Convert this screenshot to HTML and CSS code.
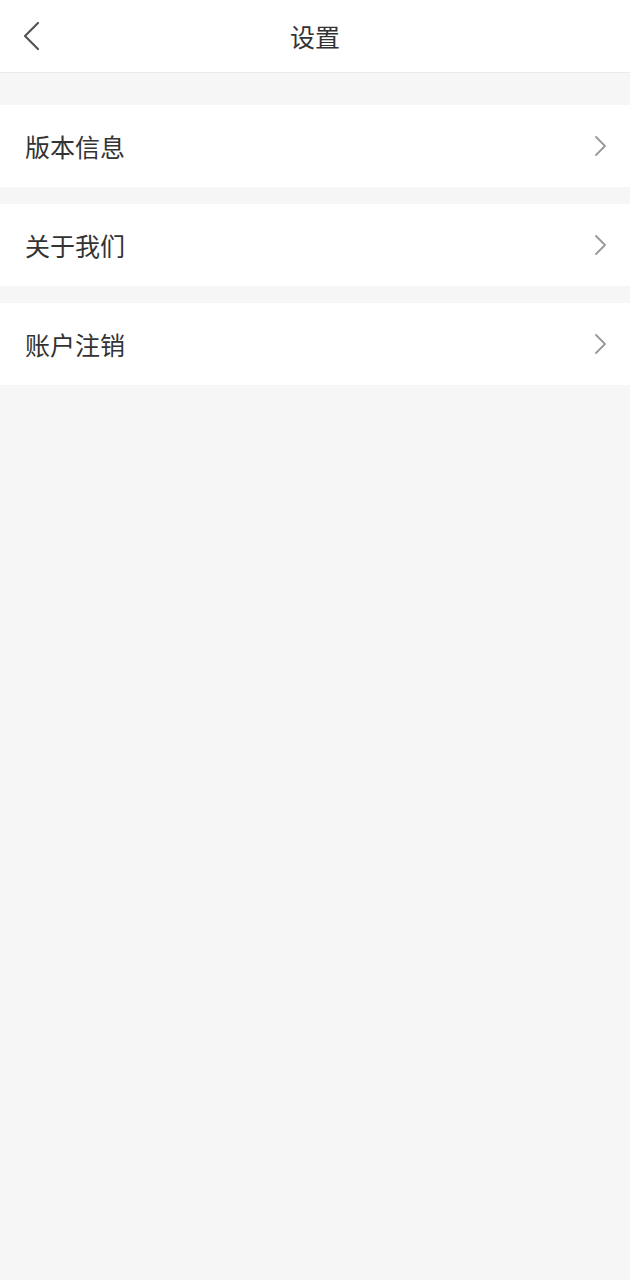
FILE: index.html
```html
<!DOCTYPE html>
<html lang="zh-CN">
<head>
    <meta charset="UTF-8">
    <meta name="viewport" content="width=device-width, initial-scale=1.0">
    <title>设置</title>
    <link rel="stylesheet" href="styles.css">
</head>
<body>
    <header class="nav-bar">
        <button class="back-btn" onclick="history.back()">
            <svg width="20" height="30" viewBox="0 0 20 30">
                <polyline points="17,2 4,15 17,28" fill="none" stroke="#555" stroke-width="2.2" stroke-linecap="round" stroke-linejoin="round"/>
            </svg>
        </button>
        <h1>设置</h1>
    </header>

    <div class="menu">
        <div class="menu-item">
            <span>版本信息</span>
            <svg class="arrow" width="14" height="22" viewBox="0 0 14 22">
                <polyline points="2,2 11,11 2,20" fill="none" stroke="#999" stroke-width="1.8" stroke-linecap="round" stroke-linejoin="round"/>
            </svg>
        </div>
        <div class="menu-item">
            <span>关于我们</span>
            <svg class="arrow" width="14" height="22" viewBox="0 0 14 22">
                <polyline points="2,2 11,11 2,20" fill="none" stroke="#999" stroke-width="1.8" stroke-linecap="round" stroke-linejoin="round"/>
            </svg>
        </div>
        <div class="menu-item">
            <span>账户注销</span>
            <svg class="arrow" width="14" height="22" viewBox="0 0 14 22">
                <polyline points="2,2 11,11 2,20" fill="none" stroke="#999" stroke-width="1.8" stroke-linecap="round" stroke-linejoin="round"/>
            </svg>
        </div>
    </div>
</body>
</html>
```

FILE: styles.css
```css
body {
    margin: 0;
    font-family: "Noto Sans CJK SC", "Noto Sans", sans-serif;
    background: #f6f6f6;
    color: #333;
    min-height: 100vh;
}

/* 顶部导航 */
.nav-bar {
    height: 72px;
    background: #fff;
    border-bottom: 1px solid #ebebeb;
    display: flex;
    align-items: center;
    justify-content: center;
    position: relative;
}

.nav-bar h1 {
    margin: 0;
    font-size: 25px;
    font-weight: 400;
    color: #333;
}

.back-btn {
    position: absolute;
    left: 21px;
    top: 21px;
    padding: 0;
    background: none;
    border: none;
    display: flex;
    cursor: pointer;
}

/* 菜单列表 */
.menu {
    margin-top: 32px;
    display: flex;
    flex-direction: column;
    gap: 17px;
}

.menu-item {
    height: 82px;
    background: #fff;
    display: flex;
    align-items: center;
    justify-content: space-between;
    padding: 0 22px 0 25px;
    font-size: 25px;
    color: #333;
}

.arrow {
    display: block;
}
```
